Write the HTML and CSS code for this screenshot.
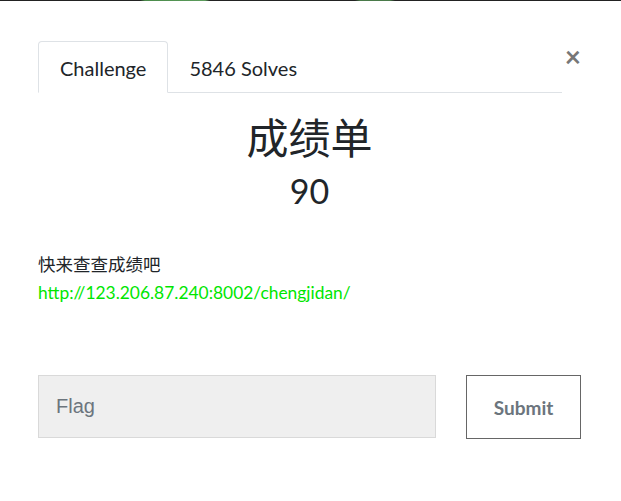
FILE: index.html
```html
<!DOCTYPE html>
<html lang="zh">
<head>
    <meta charset="UTF-8">
    <meta name="viewport" content="width=device-width, initial-scale=1.0">
    <title>Challenge</title>
    <link rel="stylesheet" href="styles.css">
</head>
<body>
    <div class="topline"></div>
    <div class="modal">
        <div class="tabs-row">
            <ul class="tabs">
                <li class="tab active">Challenge</li>
                <li class="tab">5846 Solves</li>
            </ul>
            <span class="close">&times;</span>
        </div>
        <h2 class="title">成绩单</h2>
        <h3 class="points">90</h3>
        <div class="description">
            <p>快来查查成绩吧</p>
            <a href="#" class="link">http://123.206.87.240:8002/chengjidan/</a>
        </div>
        <form class="flag-form">
            <input type="text" class="flag-input" placeholder="Flag">
            <button type="button" class="submit">Submit</button>
        </form>
    </div>
</body>
</html>
```

FILE: styles.css
```css
body {
    margin: 0;
    padding: 0;
    background: #fff;
    font-family: Lato, "Noto Sans CJK SC", sans-serif;
    color: #212529;
}
.topline {
    height: 1px;
    background: linear-gradient(90deg, #222 0, #222 140px, #4a8a4a 145px, #5c9c5c 205px, #222 210px, #222 355px, #4a7a4a 360px, #4a7a4a 390px, #222 395px);
}
.modal {
    padding: 40px 40px 0 38px;
}
.tabs-row {
    display: flex;
    align-items: flex-start;
}
.tabs {
    list-style: none;
    margin: 0;
    padding: 0;
    display: flex;
    flex: 1;
    border-bottom: 1px solid #dee2e6;
}
.tab {
    padding: 15px 21px 13px;
    font-size: 20px;
    line-height: 22px;
    border: 1px solid transparent;
    border-top-left-radius: 4px;
    border-top-right-radius: 4px;
    margin-bottom: -1px;
}
.tab.active {
    border-color: #dee2e6 #dee2e6 #fff;
}
.tab + .tab {
    padding-left: 20px;
}
.close {
    width: 18px;
    margin-left: 1px;
    margin-top: 0;
    font-size: 28px;
    font-weight: bold;
    line-height: 30px;
    color: #777;
    text-align: right;
}
.title {
    margin: 19px 0 0;
    text-align: center;
    font-size: 42px;
    font-weight: normal;
    line-height: 52px;
}
.points {
    margin: 5px 0 0;
    text-align: center;
    font-size: 34px;
    font-weight: normal;
    line-height: 44px;
}
.description {
    margin-top: 38px;
    font-size: 17.5px;
    line-height: 28px;
}
.description p {
    margin: 0;
}
.link {
    color: #00e600;
    text-decoration: none;
    font-size: 17.4px;
}
.flag-form {
    display: flex;
    margin-top: 68px;
    gap: 30px;
}
.flag-input {
    width: 398px;
    height: 63px;
    box-sizing: border-box;
    border: 1px solid #d9d9d9;
    background: #efefef;
    padding: 0 17px;
    font-size: 20px;
    font-family: "Liberation Sans", Arial, sans-serif;
    color: #495057;
}
.flag-input::placeholder {
    color: #6c757d;
}
.submit {
    width: 115px;
    height: 64px;
    background: #fff;
    border: 1px solid #666;
    font-family: Lato, sans-serif;
    font-size: 19px;
    font-weight: bold;
    color: #6c757d;
}
```
